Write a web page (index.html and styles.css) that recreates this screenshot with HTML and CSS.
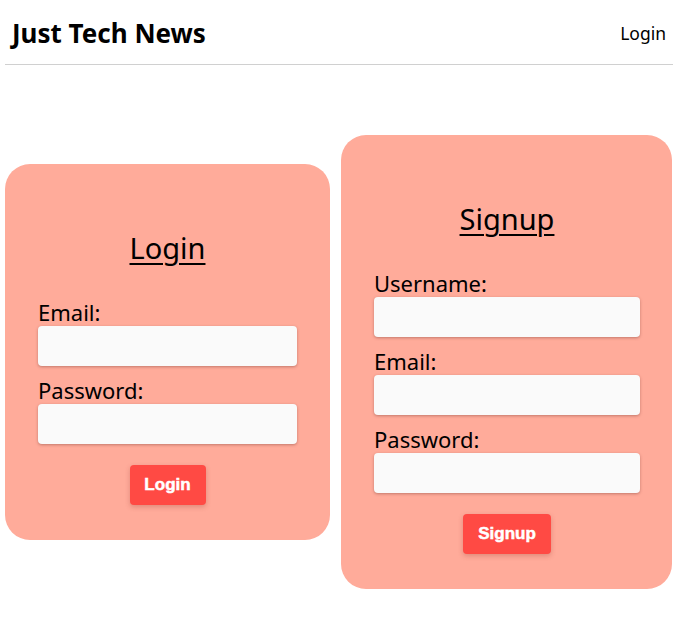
FILE: index.html
```html
<!DOCTYPE html>
<html>
<head>
<meta charset="utf-8">
<link rel="stylesheet" href="styles.css">
</head>
<body>
<header class="site-header">
  <h1 class="site-title">Just Tech News</h1>
  <nav><a class="nav-link" href="#">Login</a></nav>
</header>
<main class="forms">
  <section class="card card-login">
    <h2 class="card-title">Login</h2>
    <form class="form">
      <label class="field-label">Email:</label>
      <input class="field-input" type="text">
      <label class="field-label">Password:</label>
      <input class="field-input" type="password">
      <div class="actions"><button class="btn btn-login" type="button">Login</button></div>
    </form>
  </section>
  <section class="card card-signup">
    <h2 class="card-title">Signup</h2>
    <form class="form">
      <label class="field-label">Username:</label>
      <input class="field-input" type="text">
      <label class="field-label">Email:</label>
      <input class="field-input" type="text">
      <label class="field-label">Password:</label>
      <input class="field-input" type="password">
      <div class="actions"><button class="btn btn-signup" type="button">Signup</button></div>
    </form>
  </section>
</main>
</body>
</html>
```
FILE: styles.css
```css
* { box-sizing: border-box; }
body {
  margin: 0 6px 0 5px;
  font-family: "Noto Sans", "DejaVu Sans", sans-serif;
  color: #000;
  background: #fff;
}
.site-header {
  display: flex;
  justify-content: space-between;
  align-items: center;
  height: 65px;
  padding: 2px 7px 0;
  border-bottom: 1px solid #d0d0d0;
}
.site-title {
  margin: 0;
  font-size: 26px;
  font-weight: 700;
}
.nav-link {
  color: #000;
  text-decoration: none;
  font-size: 17.5px;
}
.forms {
  display: flex;
  align-items: flex-start;
  gap: 11px;
  margin-top: 70px;
}
.card {
  background: #ffab9a;
  border-radius: 25px;
  padding: 33px 33px 35px;
}
.card-login { width: 325px; margin-top: 29px; }
.card-signup { width: 331px; padding-right: 32px; }
.card-title {
  margin: 32px 0 34px;
  text-align: center;
  font-size: 29px;
  font-weight: 400;
  line-height: 37px;
  text-decoration: underline;
  text-decoration-thickness: 2px;
  text-underline-offset: 4px;
}
.form { display: flex; flex-direction: column; }
.field-label {
  font-size: 22px;
  line-height: 24px;
  padding-bottom: 2px;
}
.field-input {
  height: 40px;
  margin: 0 0 12px;
  border: none;
  border-radius: 4px;
  background: #fafafa;
  box-shadow: 0 1px 3px rgba(120, 60, 50, 0.45);
}
.actions {
  display: flex;
  justify-content: center;
  margin-top: 9px;
}
.btn {
  height: 40px;
  border: none;
  border-radius: 4px;
  background: #ff4a44;
  color: #fff;
  font-family: "Liberation Sans", Arial, sans-serif;
  font-weight: 700;
  font-size: 17px;
  -webkit-text-stroke: 0.5px #fff;
  box-shadow: 0 2px 5px rgba(150, 60, 50, 0.3);
}
.btn-login { width: 76px; }
.btn-signup { width: 88px; }
```
